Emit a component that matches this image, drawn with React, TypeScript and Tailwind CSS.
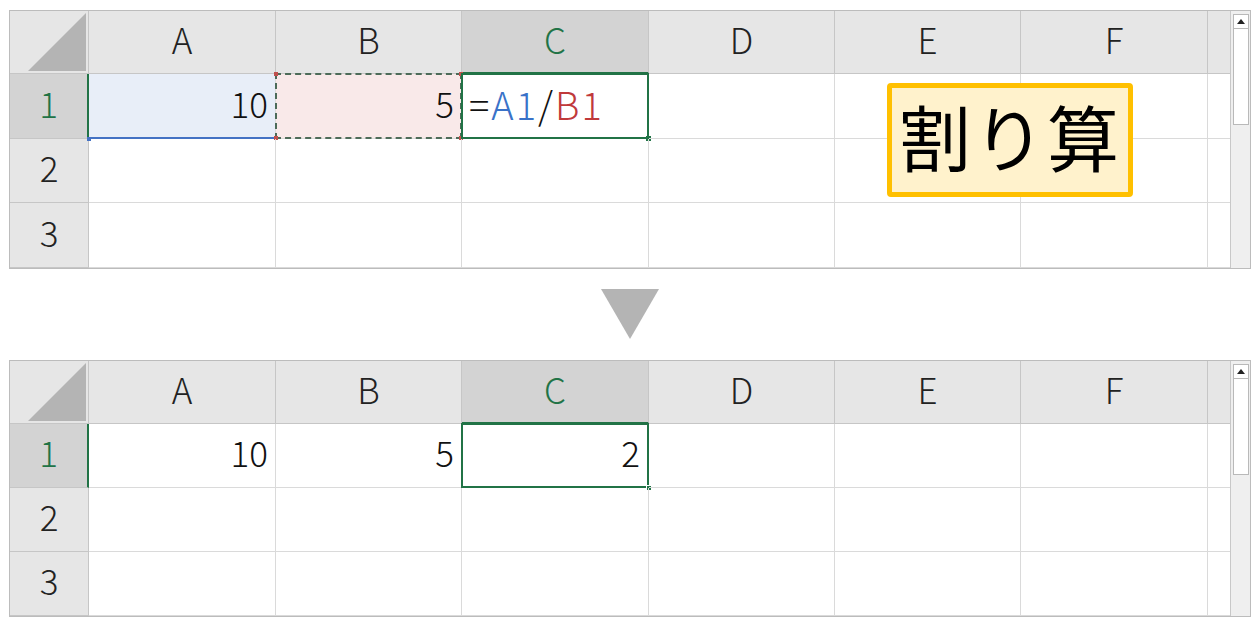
import React from "react";

const COLS = ["A", "B", "C", "D", "E", "F"];
const FONT = { fontFamily: '"Noto Sans CJK JP", "Liberation Sans", sans-serif' };

type Props = { rowHeights: string; result?: boolean };

function Scrollbar() {
  return (
    <div className="w-[22px] bg-[#efefef] border-l border-[#c8c8c8] flex flex-col items-center pt-[3px]">
      <div className="w-[16px] h-[15px] bg-white border border-[#b9b9b9] flex items-center justify-center">
        <svg width="8" height="5" viewBox="0 0 8 5">
          <polygon points="0,5 8,5 4,0" fill="#222" />
        </svg>
      </div>
      <div className="w-[16px] h-[96px] bg-white border border-[#b9b9b9] border-t-0" />
    </div>
  );
}

function Sheet({ rowHeights, result }: Props) {
  const header = "bg-[#e6e6e6] border-r border-b border-[#c6c6c6] flex items-center justify-center pb-[6px] text-[35px] font-light text-[#222]";
  const cell = "relative border-r border-b border-[#dadada] flex items-center justify-end pr-[7px] pb-[6px] text-[35px] font-light text-[#111]";

  return (
    <div className="ml-[9px] w-[1242px] border border-[#bcbcbc] flex" style={FONT}>
      <div className={`grid grid-cols-[79px_187px_186px_187px_186px_186px_187px_22px] ${rowHeights} w-[1220px]`}>
        {/* corner */}
        <div className="bg-[#e6e6e6] border-r border-b border-[#c6c6c6] relative">
          <svg className="absolute right-[2px] bottom-[2px]" width="58" height="58" viewBox="0 0 58 58">
            <polygon points="58,0 58,58 0,58" fill="#b4b4b4" />
          </svg>
        </div>
        {COLS.map((c) =>
          c === "C" ? (
            <div key={c} className="bg-[#d3d3d3] border-r border-b-2 border-r-[#c6c6c6] border-b-[#217346] flex items-center justify-center pb-[5px] text-[35px] font-light text-[#217346]">
              C
            </div>
          ) : (
            <div key={c} className={header}>{c}</div>
          )
        )}
        <div className="bg-[#e6e6e6] border-b border-[#c6c6c6]" />

        {/* row 1 */}
        <div className="bg-[#d3d3d3] border-r-2 border-b border-r-[#217346] border-b-[#c6c6c6] flex items-center justify-center pb-[6px] text-[35px] font-light text-[#217346]">1</div>
        {result ? (
          <>
            <div className={cell}>10</div>
            <div className={cell}>5</div>
            <div className={cell}>
              <span className="pr-[1px]">2</span>
              <div className="absolute -left-px -top-px -right-px -bottom-px border-2 border-[#217346]" />
              <div className="absolute -right-[4px] -bottom-[4px] w-[6px] h-[6px] bg-[#217346] border border-white" />
            </div>
          </>
        ) : (
          <>
            <div className={`${cell} bg-[#e8eef8]`}>
              10
              <div className="absolute left-0 right-0 -bottom-px h-[2px] bg-[#4472c4]" />
              <div className="absolute -left-[2px] -bottom-[3px] w-[4px] h-[4px] bg-[#4472c4]" />
            </div>
            <div className={`${cell} bg-[#f9e9e9] pr-[6px]`}>
              5
              <div className="absolute -left-px -top-px -right-px -bottom-px border-2 border-dashed border-[#4d6b58]" />
              <div className="absolute -left-[2px] -top-[2px] w-[4px] h-[4px] bg-[#c0504d]" />
              <div className="absolute -left-[2px] -bottom-[2px] w-[4px] h-[4px] bg-[#c0504d]" />
              <div className="absolute -right-[2px] -top-[2px] w-[4px] h-[4px] bg-[#c0504d]" />
              <div className="absolute -right-[2px] -bottom-[2px] w-[4px] h-[4px] bg-[#c0504d]" />
            </div>
            <div className={`${cell} justify-start pl-[7px] text-[38px] tracking-[2px]`}>
              <span>=</span>
              <span className="text-[#3a72c8]">A1</span>
              <span>/</span>
              <span className="text-[#c0393b]">B1</span>
              <div className="absolute -left-px -top-px -right-px -bottom-px border-2 border-[#217346]" />
              <div className="absolute -right-[3px] -bottom-[3px] w-[5px] h-[5px] bg-[#217346]" />
            </div>
          </>
        )}
        <div className={cell} />
        <div className={cell} />
        <div className={cell} />
        <div className="border-b border-[#dadada]" />

        {/* rows 2, 3 */}
        {["2", "3"].map((r) => (
          <React.Fragment key={r}>
            <div className={header}>{r}</div>
            {COLS.map((c) => (
              <div key={c} className={cell} />
            ))}
            <div className="border-b border-[#dadada]" />
          </React.Fragment>
        ))}
      </div>
      <Scrollbar />
    </div>
  );
}

export default function App() {
  return (
    <div className="relative w-[1260px] h-[628px] bg-white pt-[10px] overflow-hidden">
      <Sheet rowHeights="grid-rows-[63px_65px_64px_65px]" />

      <div className="flex justify-center pt-[20px] pb-[21px]">
        <svg width="58" height="50" viewBox="0 0 58 50">
          <polygon points="0,0 58,0 29,50" fill="#b4b4b4" />
        </svg>
      </div>

      <Sheet rowHeights="grid-rows-[63px_64px_64px_64px]" result />

      {/* label */}
      <div
        className="absolute left-[887px] top-[83px] w-[246px] h-[114px] border-[5px] border-[#ffc000] rounded-[4px] bg-[#fff2cc] flex items-center justify-center pb-[10px] text-[72px] leading-none tracking-[2px] text-black"
        style={FONT}
      >
        割り算
      </div>
    </div>
  );
}
